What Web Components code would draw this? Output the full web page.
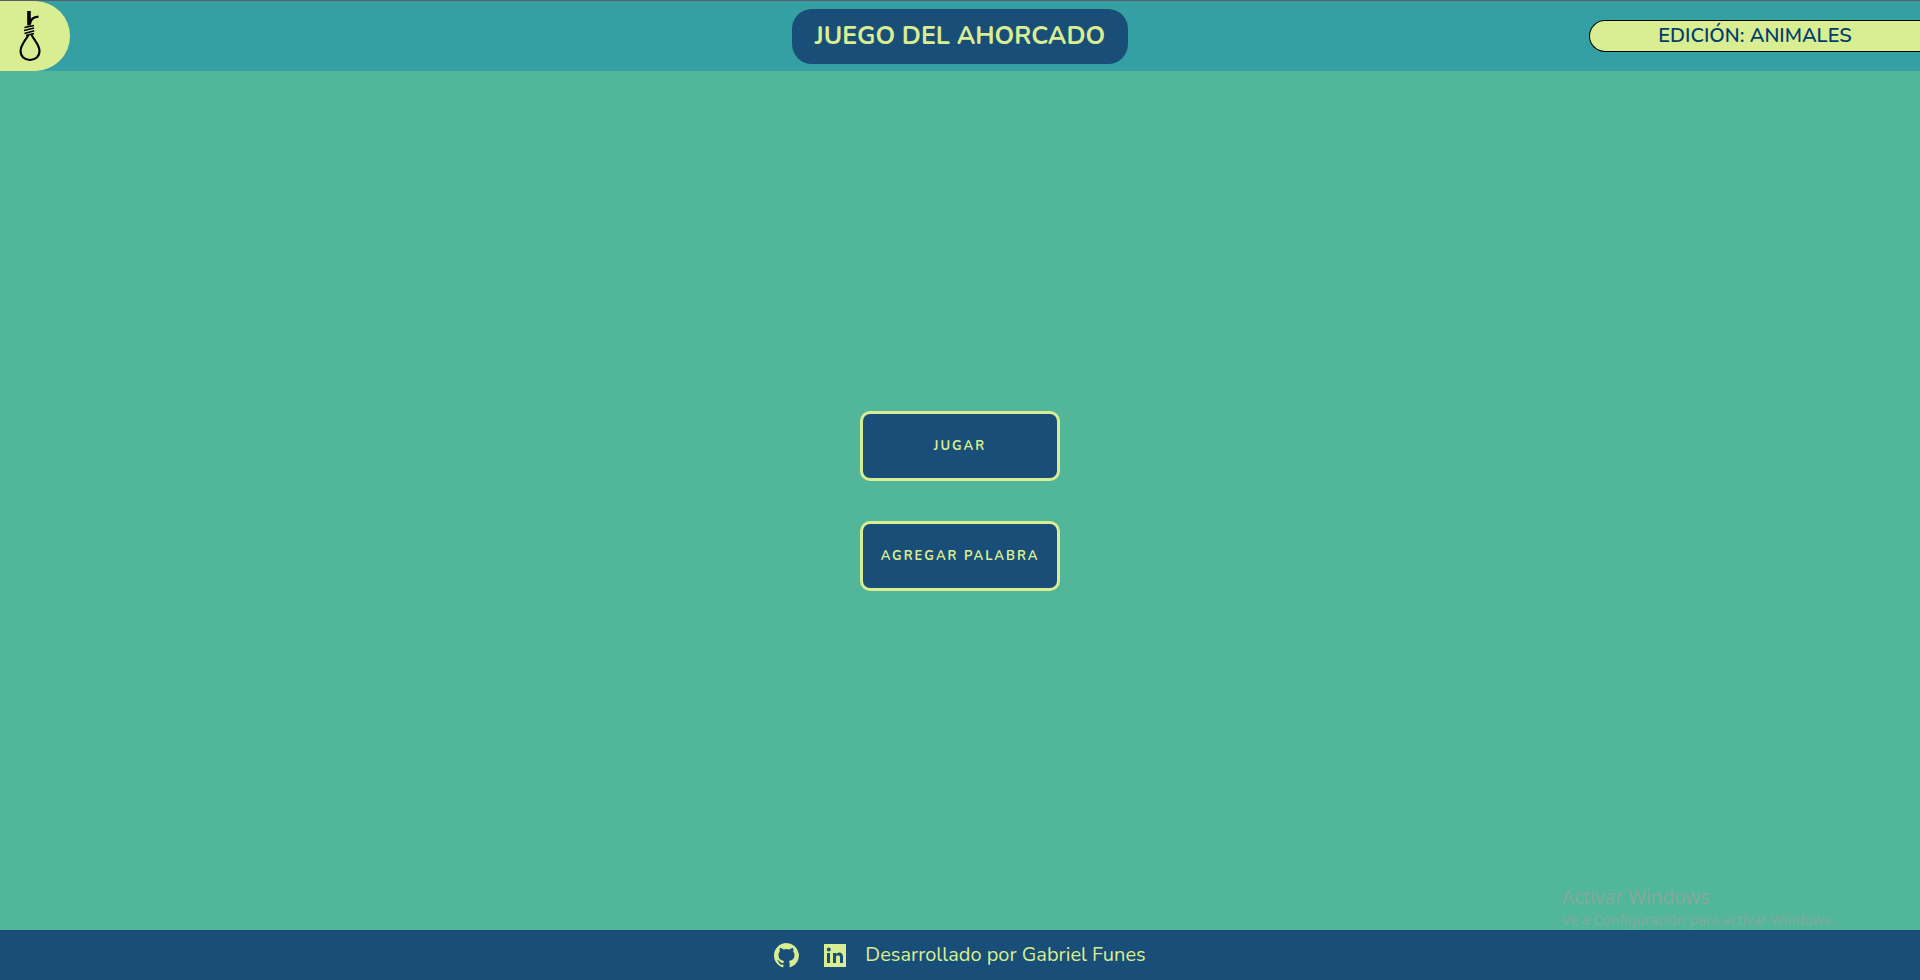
<!DOCTYPE html>
<html lang="es">
<head>
<meta charset="utf-8">
<title>Juego del ahorcado</title>
<style>
  :root {
    --lime: #d9ed92;
    --navy: #184e77;
    --teal: #34a0a4;
    --green: #52b69a;
  }
  body { margin: 0; font-family: Nunito, Lato, "Open Sans", sans-serif; }
</style>
</head>
<body>
<game-app></game-app>

<script>
class BaseElement extends HTMLElement {
  constructor() {
    super();
    this.attachShadow({ mode: "open" }).innerHTML = this.constructor.markup;
  }
}

class GameLogo extends BaseElement {
  static markup = `
    <style>
      :host { display: flex; align-items: center; width: 70px; height: 70px; background: var(--lime); border-radius: 0 35px 35px 0; }
      svg { display: block; margin-left: 18px; }
    </style>
    <svg width="24" height="52" viewBox="0 0 24 52" fill="none" stroke="#000" role="img" aria-label="Ahorcado">
      <path d="M11 1V15.500" stroke-width="3.600"/>
      <path d="M12 14C12.500 9.500 15 7 20.500 6.700" stroke-width="2.200"/>
      <path d="M6.500 17.500L16 15.500M6 20.500L16 18M6.500 23.500L16.300 20.800M8 25.500L16 23.500" stroke-width="1.500"/>
      <path d="M10.500 25C7 31 2.600 35 2.600 41C2.600 46.500 6.500 50 12 50C17.500 50 21.500 46.500 21.500 41C21.500 35 17 31 13.500 25" stroke-width="2.100"/>
    </svg>`;
}

class GameHeader extends BaseElement {
  static markup = `
    <style>
      :host { display: block; }
      header { display: grid; grid-template-columns: 1fr auto 1fr; align-items: center; height: 70px; background: var(--teal); border-top: 1px solid #5c5d66; }
      h1 { margin: 0; padding: 0 23px; font-size: 25px; line-height: 55px; font-weight: 700; color: var(--lime); background: var(--navy); border-radius: 20px; }
      p { box-sizing: border-box; justify-self: end; width: 331px; margin: 0; font-size: 20px; line-height: 30px; font-weight: 600; text-align: center; color: #023e6a; background: var(--lime); border: 1px solid #000; border-right: 0; border-radius: 16px 0 0 16px; }
    </style>
    <header>
      <game-logo></game-logo>
      <h1>JUEGO DEL AHORCADO</h1>
      <p>EDICIÓN: ANIMALES</p>
    </header>`;
}

class GameButton extends BaseElement {
  static markup = `
    <style>
      :host { display: block; }
      button { display: block; width: 200px; height: 70px; padding: 0; font: inherit; font-size: 13px; font-weight: 700; letter-spacing: 2px; color: var(--lime); background: var(--navy); border: 3px solid var(--lime); border-radius: 10px; cursor: pointer; }
    </style>
    <button type="button"><slot></slot></button>`;
}

class SystemNotice extends BaseElement {
  static markup = `
    <style>
      :host { position: absolute; right: 86px; bottom: 0; color: #82aa9f; font-family: "Segoe UI", "Noto Sans", sans-serif; }
      p { margin: 0; white-space: nowrap; }
      .title { font-size: 19px; line-height: 26px; }
      .detail { font-size: 14px; line-height: 20px; }
    </style>
    <p class="title">Activar Windows</p>
    <p class="detail">Ve a Configuración para activar Windows.</p>`;
}

class GameMenu extends BaseElement {
  static markup = `
    <style>
      :host { display: flex; flex: 1; }
      main { position: relative; flex: 1; display: flex; flex-direction: column; align-items: center; justify-content: center; gap: 40px; background: var(--green); }
    </style>
    <main>
      <game-button>JUGAR</game-button>
      <game-button>AGREGAR PALABRA</game-button>
      <system-notice></system-notice>
    </main>`;
}

class GameFooter extends BaseElement {
  static markup = `
    <style>
      :host { display: block; }
      footer { display: flex; align-items: center; justify-content: center; height: 50px; background: var(--navy); color: var(--lime); }
      a { display: block; color: inherit; margin-right: 25px; }
      a + a { margin-right: 19px; }
      svg { display: block; fill: currentColor; }
      p { margin: 0; font-size: 20px; line-height: 24px; }
    </style>
    <footer>
      <a href="https://github.com/" aria-label="GitHub">
        <svg width="25" height="25" viewBox="0.5 0.5 15 15"><path d="M8 .500C3.800.500.500 3.800.500 8c0 3.300 2.150 6.100 5.130 7.100.370.070.510-.160.510-.360v-1.300c-2.090.450-2.530-1-2.530-1-.340-.870-.830-1.100-.830-1.100-.680-.460.050-.450.050-.450.750.050 1.150.770 1.150.770.670 1.150 1.750.820 2.180.620.070-.480.260-.820.480-1-1.670-.190-3.420-.830-3.420-3.700 0-.820.290-1.490.770-2.010-.080-.190-.330-.950.070-1.990 0 0 .630-.200 2.060.770a7.200 7.200 0 0 1 3.760 0c1.430-.970 2.060-.770 2.060-.770.410 1.040.150 1.800.070 1.990.480.520.770 1.190.770 2.010 0 2.880-1.760 3.510-3.430 3.700.270.230.510.690.510 1.390v2.060c0 .200.140.440.520.360A7.500 7.500 0 0 0 8 .500z"/></svg>
      </a>
      <a href="https://www.linkedin.com/" aria-label="LinkedIn">
        <svg width="22" height="23" viewBox="0 0 22 23"><path fill-rule="evenodd" d="M0 0H22V23H0ZM3 9V19H6V9ZM4.800 3.500A2 2 0 1 0 4.800 7.500A2 2 0 1 0 4.800 3.500ZM9 9V19H12V13.500C12 12 13 11.300 14 11.300S16 12 16 13.500V19H19V13C19 10 17.500 8.500 15.200 8.500C13.600 8.500 12.600 9.300 12 10.300V9Z"/></svg>
      </a>
      <p>Desarrollado por Gabriel Funes</p>
    </footer>`;
}

class GameApp extends BaseElement {
  static markup = `
    <style>
      :host { display: flex; flex-direction: column; min-height: 100vh; }
    </style>
    <game-header></game-header>
    <game-menu></game-menu>
    <game-footer></game-footer>`;
}

customElements.define("game-logo", GameLogo);
customElements.define("game-header", GameHeader);
customElements.define("game-button", GameButton);
customElements.define("system-notice", SystemNotice);
customElements.define("game-menu", GameMenu);
customElements.define("game-footer", GameFooter);
customElements.define("game-app", GameApp);
</script>
</body>
</html>
